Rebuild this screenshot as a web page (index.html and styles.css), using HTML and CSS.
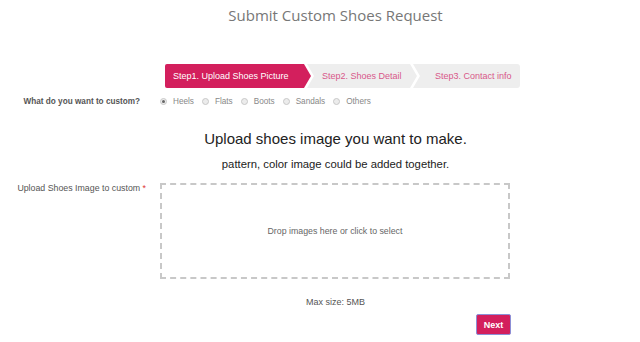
FILE: index.html
```html
<!DOCTYPE html>
<html>
<head>
<meta charset="utf-8">
<link rel="stylesheet" href="styles.css">
</head>
<body>
<div class="page">
  <h1 class="title">Submit Custom Shoes Request</h1>
  <div class="steps">
    <div class="step step-active">Step1. Upload Shoes Picture</div>
    <div class="step step-mid">Step2. Shoes Detail</div>
    <div class="step step-last">Step3. Contact info</div>
  </div>
  <div class="row row-type">
    <div class="label label-type">What do you want to custom?</div>
    <div class="radios">
      <span class="radio-item"><span class="radio checked"></span>Heels</span>
      <span class="radio-item"><span class="radio"></span>Flats</span>
      <span class="radio-item"><span class="radio"></span>Boots</span>
      <span class="radio-item"><span class="radio"></span>Sandals</span>
      <span class="radio-item"><span class="radio"></span>Others</span>
    </div>
  </div>
  <h2 class="heading">Upload shoes image you want to make.</h2>
  <p class="sub">pattern, color image could be added together.</p>
  <div class="row row-upload">
    <div class="label label-upload">Upload Shoes Image to custom <span class="req">*</span></div>
    <div class="dropzone"><span class="drop-text">Drop images here or click to select</span></div>
  </div>
  <p class="maxsize">Max size: 5MB</p>
  <div class="actions"><button class="next">Next</button></div>
</div>
</body>
</html>
```
FILE: styles.css
```css
* { box-sizing: border-box; }
html, body { margin: 0; padding: 0; background: #fff; }
body { font-family: "Liberation Sans", Arial, sans-serif; color: #333; width: 640px; height: 342px; overflow: hidden; }
.page { width: 640px; }
.title {
  margin: 0;
  padding-top: 5px;
  height: 64px;
  font-family: "Open Sans", sans-serif;
  font-weight: 400;
  font-size: 15px;
  line-height: 20px;
  color: #777;
  text-align: center;
  padding-left: 31px;
}
.steps { display: flex; margin-left: 165px; height: 24px; }
.step {
  height: 24px;
  line-height: 24px;
  font-size: 9px;
  white-space: nowrap;
}
.step-active {
  width: 146px;
  background: #d31f5d;
  color: #fff;
  padding-left: 8px;
  clip-path: polygon(0 0, calc(100% - 7px) 0, 100% 50%, calc(100% - 7px) 100%, 0 100%);
  border-radius: 2px 0 0 2px;
}
.step-mid {
  width: 110px;
  margin-left: -4px;
  background: #eeeeee;
  color: #d8588a;
  padding-left: 15px;
  clip-path: polygon(0 0, calc(100% - 7px) 0, 100% 50%, calc(100% - 7px) 100%, 0 100%, 7px 50%);
}
.step-last {
  width: 107px;
  margin-left: -4px;
  background: #eeeeee;
  color: #d8588a;
  padding-left: 22px;
  clip-path: polygon(0 0, 100% 0, 100% 100%, 0 100%, 7px 50%);
  border-radius: 0 3px 3px 0;
}
.row { display: grid; grid-template-columns: 160px 350px; }
.row-type { margin-top: 3px; height: 20px; align-items: center; }
.label { text-align: right; color: #555; }
.label-type { font-size: 8.2px; font-weight: bold; padding-right: 20px; }
.radios { display: flex; align-items: center; font-size: 8.2px; color: #888; }
.radio-item { display: inline-flex; align-items: center; margin-right: 8px; }
.radio {
  width: 7px; height: 7px; border-radius: 50%;
  border: 1px solid #c8c8c8;
  background: #ececec;
  margin-right: 6px;
  position: relative;
}
.radio.checked::after {
  content: ""; position: absolute; left: 1px; top: 1px; width: 3px; height: 3px; border-radius: 50%; background: #666;
}
.heading {
  margin: 18px 0 0;
  font-size: 15px;
  font-weight: 400;
  line-height: 20px;
  color: #222;
  text-align: center;
  padding-left: 31px;
}
.sub {
  margin: 8px 0 0;
  font-size: 11.3px;
  line-height: 14px;
  color: #222;
  text-align: center;
  padding-left: 31px;
}
.row-upload { margin-top: 12px; }
.label-upload { font-size: 8.8px; padding-right: 14px; padding-top: 0; color: #555; }
.req { color: #d33; }
.dropzone {
  height: 96px;
  border: 2px dashed #c8c8c8;
  display: flex; align-items: center; justify-content: center;
}
.drop-text { font-size: 8.8px; color: #666; }
.maxsize { margin: 18px 0 0; padding-left: 306px; font-size: 9px; color: #555; line-height: 10px; }
.actions { display: flex; padding-left: 476px; margin-top: 7px; }
.next {
  width: 35px; height: 21px;
  background: #d31f5d;
  color: #fff;
  border: 1px solid #8c8fd6;
  border-radius: 2px;
  font-family: "Liberation Sans", Arial, sans-serif;
  font-weight: bold;
  font-size: 9px;
  padding: 0;
}
```
